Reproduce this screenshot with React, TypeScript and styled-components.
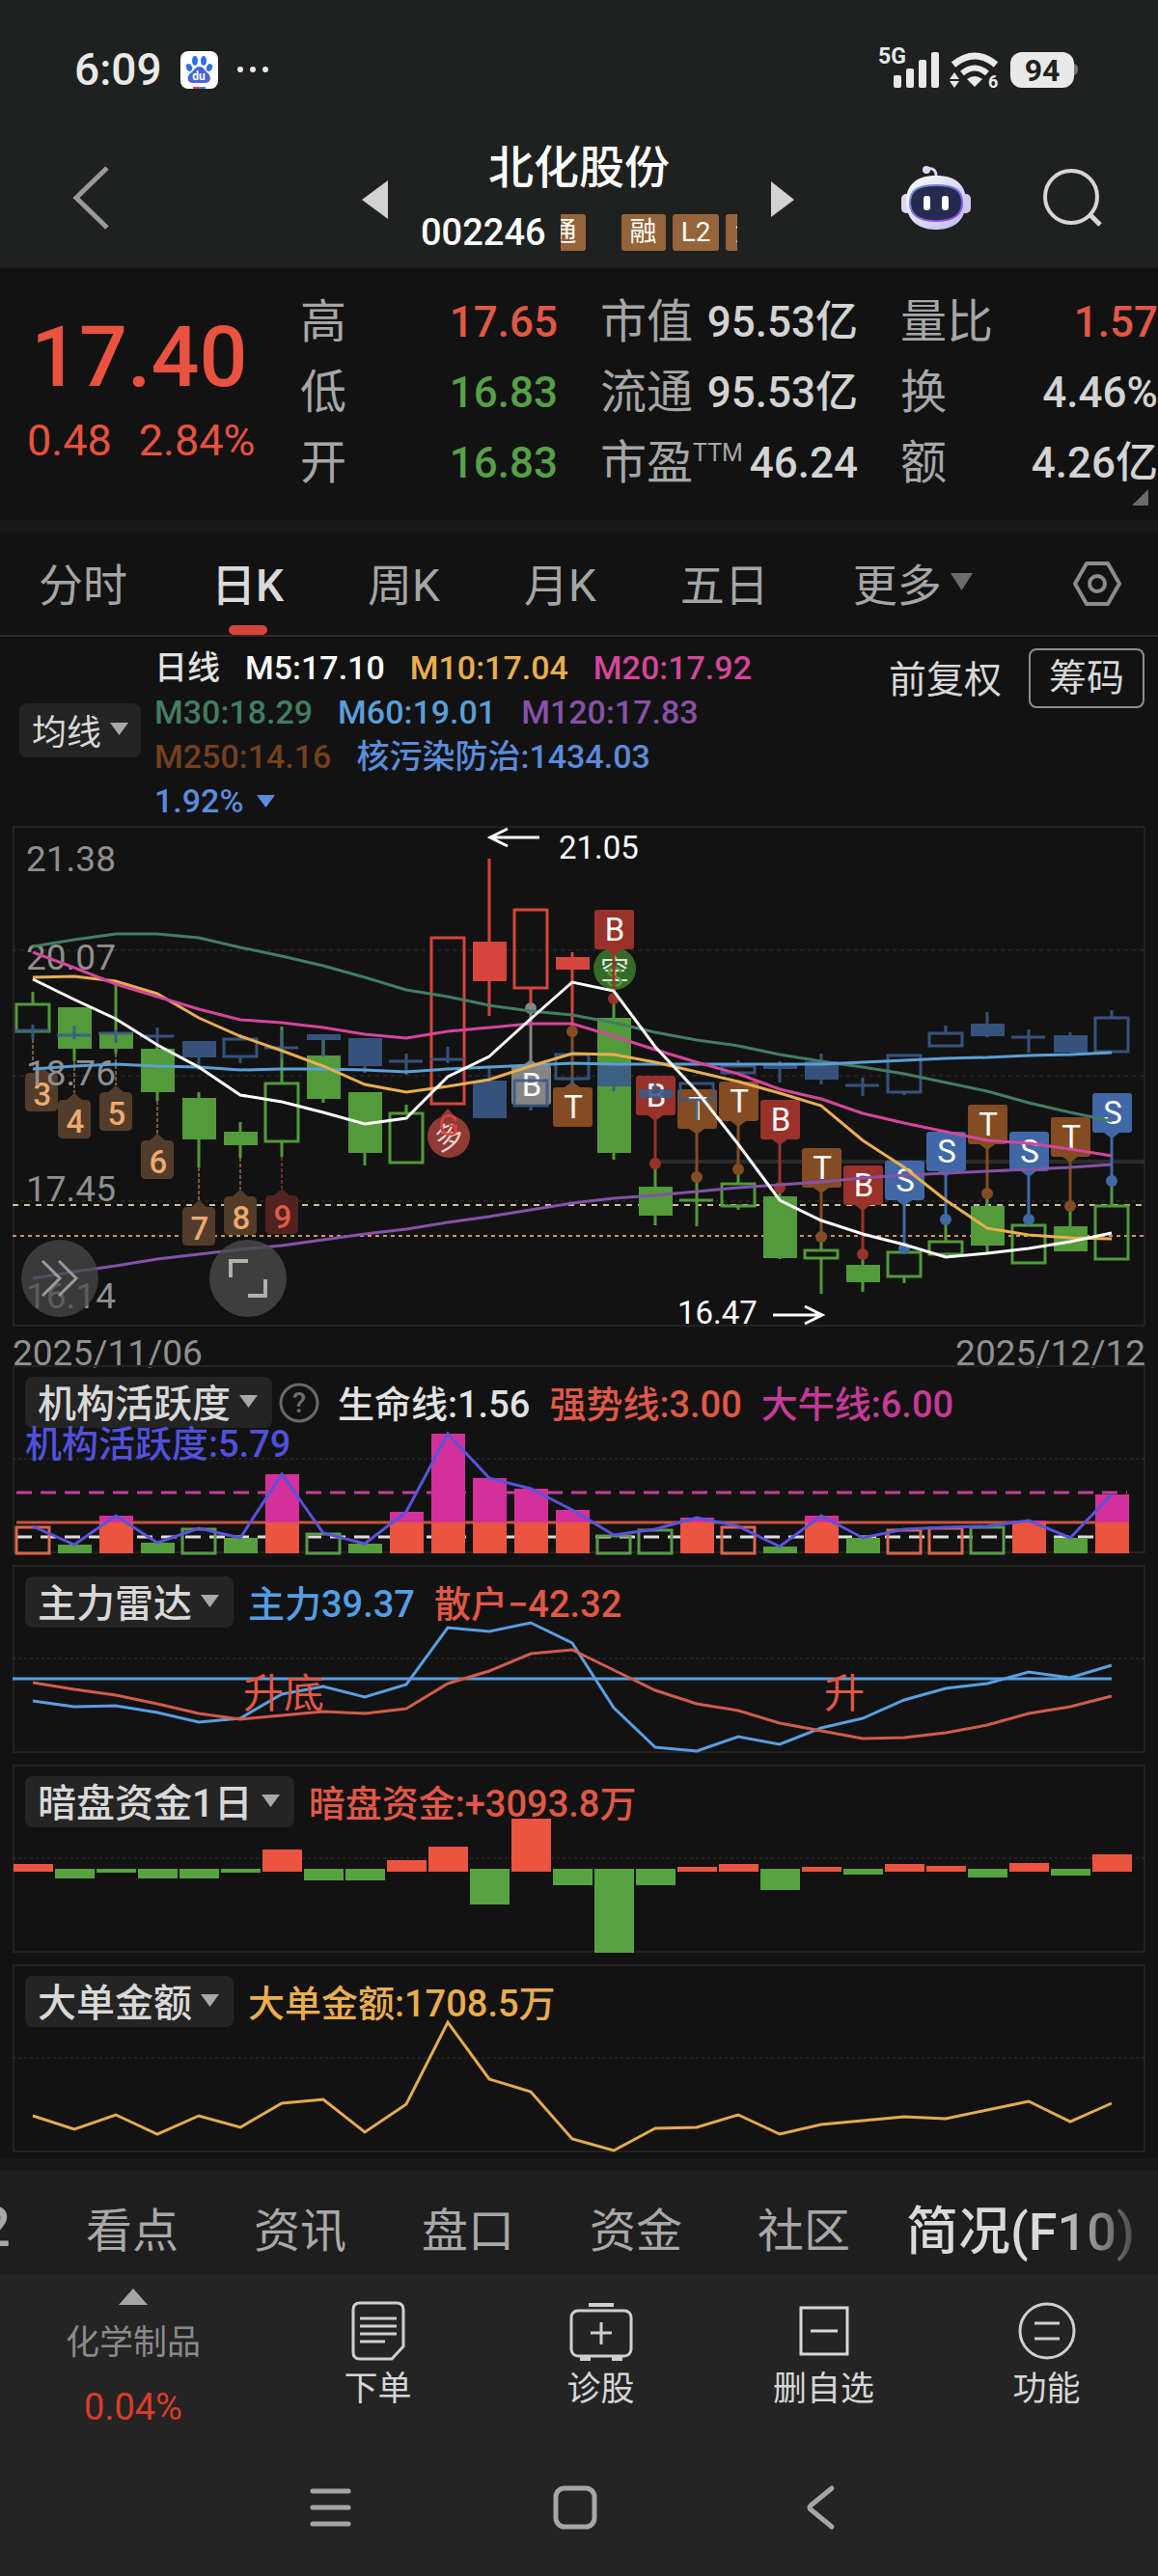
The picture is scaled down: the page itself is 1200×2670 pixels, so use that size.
import React from "react";
import styled, { createGlobalStyle, css } from "styled-components";

const RED = "#e05846";
const GREEN = "#529a3a";
const INDEX_BLUE = "#3a5a88";

const Global = createGlobalStyle`
  *, *::before, *::after { box-sizing: border-box; }
  body { margin: 0; background: #121212; }
  button {
    margin: 0; padding: 0; border: 0; background: none; color: inherit;
    font: inherit; line-height: inherit; cursor: pointer; white-space: nowrap;
  }
  h1, dl, dt, dd, p { margin: 0; font-weight: inherit; }
  svg { display: block; flex: none; }
`;

const Page = styled.div`
  min-height: 100vh;
  display: flex;
  flex-direction: column;
  background: #121212;
  color: #d8d8d8;
  font-family: Roboto, "Noto Sans CJK SC", sans-serif;
  overflow: hidden;
`;

/* ---------- status bar and title ---------- */

const Top = styled.header`
  background: #1f2120;
  padding-bottom: 8px;
`;

const StatusBar = styled.div`
  height: 144px;
  padding: 0 83px 0 77px;
  display: flex;
  align-items: center;
  justify-content: space-between;
  color: #e9e9e9;
`;

const StatusGroup = styled.div<{ $gap: number }>`
  display: flex;
  align-items: center;
  gap: ${(p) => p.$gap}px;
`;

const Clock = styled.span`
  font-size: 46px;
  line-height: 54px;
  font-weight: 500;
`;

const TitleBar = styled.div`
  height: 126px;
  display: grid;
  grid-template-columns: 1fr 450px 1fr;
  align-items: center;
`;

const BackCell = styled.div`
  padding-left: 74px;
`;

const ActionCell = styled.div`
  display: flex;
  justify-content: flex-end;
  align-items: center;
  gap: 73px;
  padding: 0 58px 4px 0;
`;

const StockPicker = styled.div`
  display: flex;
  align-items: center;
  gap: 34px;
`;

const StockTitle = styled.div`
  flex: 1;
  min-width: 0;
  display: flex;
  flex-direction: column;
  align-items: center;
  color: #fff;
`;

const StockName = styled.h1`
  font-size: 47px;
  line-height: 60px;
  padding-bottom: 6px;
  font-weight: 500;
`;

const CodeLine = styled.div`
  width: 100%;
  height: 60px;
  padding-top: 2px;
  display: flex;
  align-items: center;
  gap: 15px;
  font-size: 38px;
  line-height: 44px;
  font-weight: 500;
`;

const Marquee = styled.div`
  flex: 1;
  min-width: 0;
  overflow: hidden;
`;

const MarqueeTrack = styled.div`
  display: flex;
  gap: 7px;
  margin-left: -20px;
`;

const Tag = styled.span<{ $spaced?: boolean }>`
  flex: none;
  padding: 0 9px;
  margin-right: ${(p) => (p.$spaced ? 30 : 0)}px;
  background: #95643a;
  border-radius: 3px;
  font-size: 28px;
  line-height: 38px;
  font-weight: 400;
`;

/* ---------- quote ---------- */

const Quote = styled.section`
  height: 261px;
  padding-top: 19px;
  display: grid;
  grid-template-columns: 267px repeat(3, 1fr);
  column-gap: 44px;
  position: relative;
`;

const PriceBlock = styled.div`
  padding: 29px 0 0 28px;
  color: #e9523f;
  white-space: nowrap;
`;

const Price = styled.div`
  font-size: 88px;
  line-height: 88px;
  padding-left: 4px;
  font-weight: 500;
`;

const Change = styled.div`
  display: flex;
  gap: 28px;
  padding-top: 13px;
  font-size: 45px;
  line-height: 60px;
`;

const Facts = styled.dl`
  display: flex;
  flex-direction: column;
`;

const Fact = styled.div`
  height: 73px;
  display: flex;
  align-items: center;
  justify-content: space-between;
  white-space: nowrap;
`;

const FactName = styled.dt`
  display: flex;
  font-size: 48px;
  line-height: 70px;
  color: #a6a6a6;
`;

const Small = styled.small`
  font-size: 25px;
  line-height: 50px;
`;

const FactValue = styled.dd<{ $color?: string }>`
  font-size: 44px;
  line-height: 64px;
  font-weight: 500;
  color: ${(p) => p.$color ?? "#d3d3d3"};
`;

const Corner = styled.svg`
  position: absolute;
  right: 10px;
  bottom: 15px;
`;

/* ---------- period tabs ---------- */

const Band = styled.div`
  height: 13px;
  background: #181818;
`;

const PeriodTabs = styled.nav`
  height: 108px;
  padding: 0 38px 0 40px;
  display: flex;
  align-items: stretch;
  gap: 87px;
  border-bottom: 2px solid #2c2c2c;
`;

const PeriodTab = styled.button<{ $on?: boolean }>`
  display: flex;
  align-items: center;
  gap: 9px;
  padding-bottom: 5px;
  font-size: 46px;
  color: #a5a5a5;
  ${(p) =>
    p.$on &&
    css`
      color: #dadada;
      font-weight: 500;
      position: relative;
      &::after {
        content: "";
        position: absolute;
        left: calc(50% - 20px);
        bottom: 0;
        width: 40px;
        height: 10px;
        border-radius: 5px;
        background: #d5453d;
      }
    `}
`;

const SettingsButton = styled.button`
  margin-left: auto;
`;

/* ---------- moving averages ---------- */

const Averages = styled.section`
  height: 196px;
  padding: 9px 14px 0 20px;
  display: flex;
  gap: 14px;
`;

const Chip = styled.button<{ $size: "small" | "large" }>`
  flex: none;
  display: flex;
  align-items: center;
  justify-content: center;
  border-radius: 8px;
  background: #242424;
  color: #d8d8d8;
  padding-bottom: 3px;
  ${(p) =>
    p.$size === "small"
      ? css`
          width: 126px;
          height: 56px;
          margin-top: 60px;
          gap: 9px;
          font-size: 36px;
        `
      : css`
          height: 53px;
          padding-left: 13px;
          padding-right: 15px;
          gap: 9px;
          font-size: 40px;
        `}
`;

const AverageLines = styled.div`
  display: flex;
  flex-direction: column;
  font-size: 34px;
  line-height: 46px;
  font-weight: 500;
`;

const AverageRow = styled.div`
  display: flex;
  align-items: center;
  gap: 26px;
  white-space: nowrap;
`;

const Ink = styled.span<{ $color: string }>`
  color: ${(p) => p.$color};
`;

const IndexChange = styled.button`
  display: flex;
  align-items: center;
  gap: 14px;
  color: #5b8cdc;
`;

const AdjustTools = styled.div`
  margin: 3px 0 0 auto;
  height: 66px;
  display: flex;
  align-items: center;
  gap: 28px;
  font-size: 39px;
  line-height: 56px;
  color: #d8d8d8;
`;

const ChipsButton = styled.button`
  width: 120px;
  height: 62px;
  margin-top: -4px;
  border: 2px solid #8f8f8f;
  border-radius: 8px;
`;

/* ---------- charts ---------- */

const Charts = styled.main`
  padding: 0 13px 6px;
  display: flex;
  flex-direction: column;
`;

const Stage = styled.div`
  position: relative;
`;

const Plot = styled.svg`
  width: 100%;
  height: auto;
  overflow: visible;
`;

const RoundButton = styled.button<{ $left: number; $alpha: number }>`
  position: absolute;
  left: ${(p) => p.$left}px;
  bottom: 10px;
  width: 80px;
  height: 80px;
  border-radius: 50%;
  display: grid;
  place-items: center;
  background: rgba(74, 74, 74, ${(p) => p.$alpha});
`;

const Dates = styled.div`
  height: 40px;
  display: flex;
  justify-content: space-between;
  font-size: 37px;
  line-height: 56px;
  color: #909090;
`;

const Panels = styled.div`
  display: flex;
  flex-direction: column;
  gap: 12px;
`;

const PanelBox = styled.section`
  display: grid;
  > * {
    grid-area: 1 / 1;
  }
`;

const PanelHead = styled.div`
  z-index: 1;
  align-self: start;
  padding: 12px 13px 0;
`;

const Legend = styled.div`
  display: flex;
  align-items: center;
  gap: 15px;
  height: 53px;
  font-size: 38px;
  font-weight: 500;
  white-space: nowrap;
`;

const LegendItems = styled.div`
  display: flex;
  gap: 20px;
  padding-bottom: 3px;
`;

const HelpButton = styled.button`
  margin: 0 4px 0 -8px;
`;

const SecondLine = styled.p`
  font-size: 38px;
  line-height: 34px;
  font-weight: 500;
`;

/* ---------- bottom ---------- */

const SectionTabs = styled.nav`
  height: 108px;
  padding-top: 8px;
  display: flex;
  align-items: center;
  gap: 78px;
  background: #1e1e1e;
  overflow: hidden;
`;

const SectionTab = styled.button<{ $kind?: "cut" | "on" }>`
  flex: none;
  font-size: 48px;
  color: #a8a8a8;
  ${(p) =>
    p.$kind === "cut" &&
    css`
      width: 11px;
      font-size: 58px;
      display: flex;
      justify-content: flex-end;
      font-weight: 500;
    `}
  ${(p) =>
    p.$kind === "on" &&
    css`
      margin-left: -20px;
      font-size: 54px;
      font-weight: 500;
      color: transparent;
      background: linear-gradient(90deg, #dadada 64%, #4a4a4a 100%);
      background-clip: text;
    `}
`;

const Footer = styled.footer`
  flex: 1;
  background: #242424;
`;

const Actions = styled.div`
  height: 168px;
  display: grid;
  grid-template-columns: 276fr repeat(4, 231fr);
`;

const Action = styled.button`
  display: flex;
  flex-direction: column;
  align-items: center;
  padding-top: 26px;
  gap: 3px;
  font-size: 35px;
  line-height: 52px;
  color: #d6d6d6;
`;

const Sector = styled(Action)`
  padding-top: 14px;
  gap: 14px;
  color: #8a8a8c;
`;

const SectorChange = styled.span`
  color: #dc3b2a;
  font-size: 38px;
`;

const SystemNav = styled.nav`
  height: 144px;
  padding-top: 48px;
  display: flex;
  justify-content: center;
  align-items: flex-start;
  gap: 206px;
  margin-right: 8px;
`;

/* ---------- shared glyphs ---------- */

const Down = ({ w = 19, h = 13, color = "#a9a9a9" }) => (
  <svg width={w} height={h} viewBox="0 0 20 14" preserveAspectRatio="none" aria-hidden="true">
    <path d="M0 0H20L10 14Z" fill={color} />
  </svg>
);

const SideArrow = ({ flip }: { flip?: boolean }) => (
  <svg width="27" height="40" viewBox="0 0 27 40" aria-hidden="true">
    <path d={flip ? "M1 1V38L25 20Z" : "M27 0V40L0 20Z"} fill="#d2d2d2" />
  </svg>
);

const BaiduIcon = () => (
  <svg width="39" height="39" viewBox="0 0 39 39" aria-hidden="true">
    <rect width="39" height="39" rx="8" fill="#fff" />
    <g fill="#2f6fe6">
      <ellipse cx="15" cy="10" rx="3" ry="5" />
      <ellipse cx="24" cy="10" rx="3" ry="5" />
      <ellipse cx="9" cy="17" rx="3" ry="4" transform="rotate(-20 9 17)" />
      <ellipse cx="30" cy="17" rx="3" ry="4" transform="rotate(20 30 17)" />
      <path d="M19.500 16c5 0 6 5 9 7 4 4 3 10-3 10H13c-6 0-7-6-3-10 4-2 5-7 9.500-7Z" fill="#4a62e0" />
    </g>
    <text x="19" y="30" textAnchor="middle" fontSize="12" fontWeight="700" fill="#fff">du</text>
    <path d="M13 37h6v2h-6Z" fill="#e0453c" />
    <path d="M19 37h7v2h-7Z" fill="#3e7bdc" />
  </svg>
);

const Radio = () => (
  <svg width="209" height="48" viewBox="908 48 209 48" fill="#e9e9e9" aria-hidden="true">
    <text x="910" y="66" fontSize="23" fontWeight="700">5G</text>
    <rect x="926" y="78" width="8" height="13" rx="2" />
    <rect x="939" y="71" width="8" height="20" rx="2" />
    <rect x="952" y="62" width="8" height="29" rx="2" />
    <rect x="965" y="54" width="8" height="37" rx="2" />
    <g fill="none" stroke="#e9e9e9" strokeWidth="7">
      <path d="M988 67Q1010 49 1032 67" />
      <path d="M997 76Q1010 65 1023 76" strokeWidth="6" />
    </g>
    <path d="M1002 82Q1010 76 1018 82L1010 90Z" />
    <path d="M984 82L989 75L994 82ZM984 84H994L989 91Z" />
    <text x="1024" y="91" fontSize="18" fontWeight="700">6</text>
    <rect x="1047" y="54" width="66" height="37" rx="12" />
    <path d="M1113 66q4 1 4 6t-4 6Z" fill="#777" />
    <text x="1080" y="84" textAnchor="middle" fontSize="32" fontWeight="700" fill="#1f2120">94</text>
  </svg>
);

const Robot = () => (
  <svg width="74" height="68" viewBox="0 0 74 68" aria-hidden="true">
    <defs>
      <linearGradient id="shell" x1="0" y1="0" x2="1" y2="1">
        <stop offset="0" stopColor="#fff" />
        <stop offset="1" stopColor="#bdb6ee" />
      </linearGradient>
      <linearGradient id="visorEdge" x1="0" y1="0" x2="1" y2="1">
        <stop offset="0" stopColor="#6a9ae6" />
        <stop offset="1" stopColor="#8f3fe0" />
      </linearGradient>
    </defs>
    <path d="M28 4q10-2 9 10" fill="none" stroke="#dcd8f2" strokeWidth="3" />
    <circle cx="27" cy="5" r="4" fill="#ddd9f5" />
    <rect x="1" y="30" width="12" height="20" rx="5" fill="#d9d6ef" />
    <rect x="61" y="30" width="12" height="20" rx="5" fill="#d0cbea" />
    <path d="M37 11c21 0 31 10 31 27S58 67 37 67 6 55 6 38s10-27 31-27Z" fill="url(#shell)" />
    <path
      d="M37 21c19 0 27 5 27 18s-9 19-27 19-27-6-27-19 8-18 27-18Z"
      fill="#262a4e"
      stroke="url(#visorEdge)"
      strokeWidth="2"
    />
    <rect x="24" y="32" width="7" height="15" rx="3" fill="#fff" />
    <rect x="43" y="32" width="7" height="15" rx="3" fill="#fff" />
  </svg>
);

/* ---------- price chart ---------- */

const xAt = (i: number) => 34 + 43 * i;

/* shape, body top, body bottom, high, low */
type Candle = ["hollow" | "solid" | "line", number, number, number, number];

const candles: Candle[] = [
  ["hollow", 1042, 1070, 1029, 1072],
  ["solid", 1045, 1088, 1045, 1101],
  ["solid", 1071, 1088, 1022, 1093],
  ["solid", 1088, 1133, 1085, 1142],
  ["solid", 1139, 1182, 1133, 1211],
  ["solid", 1174, 1188, 1164, 1201],
  ["hollow", 1124, 1184, 1065, 1200],
  ["solid", 1095, 1140, 1079, 1144],
  ["solid", 1133, 1196, 1133, 1209],
  ["hollow", 1155, 1206, 1146, 1207],
  ["hollow", 973, 1145, 973, 1146],
  ["solid", 977, 1018, 891, 1054],
  ["hollow", 944, 1025, 944, 1046],
  ["solid", 993, 1006, 988, 1068],
  ["solid", 1056, 1196, 1036, 1203],
  ["solid", 1231, 1261, 1208, 1271],
  ["line", 1245, 1245, 1222, 1272],
  ["hollow", 1228, 1251, 1214, 1255],
  ["solid", 1241, 1305, 1233, 1306],
  ["hollow", 1297, 1305, 1284, 1342],
  ["solid", 1312, 1330, 1303, 1340],
  ["hollow", 1299, 1324, 1297, 1331],
  ["hollow", 1288, 1301, 1266, 1301],
  ["solid", 1251, 1292, 1240, 1299],
  ["hollow", 1271, 1310, 1268, 1310],
  ["solid", 1272, 1298, 1252, 1298],
  ["hollow", 1251, 1306, 1227, 1306],
];

const indexCandles: Candle[] = [
  ["line", 1069, 1069, 1063, 1078],
  ["line", 1074, 1074, 1064, 1078],
  ["line", 1072, 1072, 1068, 1082],
  ["line", 1075, 1075, 1066, 1085],
  ["solid", 1080, 1097, 1080, 1110],
  ["hollow", 1078, 1096, 1073, 1103],
  ["line", 1087, 1087, 1069, 1099],
  ["solid", 1073, 1079, 1073, 1096],
  ["solid", 1077, 1106, 1077, 1113],
  ["line", 1101, 1101, 1093, 1115],
  ["line", 1099, 1099, 1086, 1103],
  ["solid", 1121, 1160, 1108, 1160],
  ["hollow", 1121, 1147, 1121, 1152],
  ["hollow", 1094, 1119, 1089, 1127],
  ["solid", 1104, 1127, 1104, 1132],
  ["solid", 1130, 1139, 1124, 1142],
  ["hollow", 1124, 1141, 1124, 1162],
  ["hollow", 1106, 1113, 1100, 1113],
  ["solid", 1103, 1109, 1101, 1123],
  ["solid", 1101, 1120, 1093, 1125],
  ["line", 1126, 1126, 1118, 1137],
  ["hollow", 1095, 1133, 1095, 1136],
  ["hollow", 1072, 1085, 1064, 1086],
  ["solid", 1062, 1075, 1050, 1076],
  ["line", 1076, 1076, 1068, 1092],
  ["solid", 1074, 1092, 1071, 1092],
  ["hollow", 1056, 1091, 1048, 1091],
];

const averages: [string, number[]][] = [
  ["#437d62", [982, 975, 969, 969, 973, 983, 992, 1002, 1014, 1027, 1034, 1043, 1049, 1053, 1061, 1071, 1079, 1085, 1094, 1101, 1107, 1114, 1123, 1132, 1144, 1154, 1163]],
  ["#8552a8", [1326, 1319, 1313, 1306, 1301, 1296, 1292, 1286, 1280, 1275, 1268, 1262, 1255, 1248, 1243, 1240, 1236, 1232, 1229, 1226, 1222, 1219, 1217, 1215, 1213, 1211, 1208]],
  ["#5a9fd6", [1109, 1106, 1104, 1106, 1107, 1110, 1109, 1109, 1110, 1112, 1109, 1107, 1105, 1103, 1104, 1104, 1104, 1104, 1104, 1104, 1102, 1100, 1098, 1097, 1095, 1094, 1092]],
  ["#e9ae4e", [1014, 1013, 1018, 1031, 1056, 1075, 1090, 1106, 1125, 1133, 1127, 1120, 1106, 1093, 1094, 1102, 1112, 1122, 1134, 1147, 1183, 1211, 1245, 1274, 1281, 1284, 1285]],
  ["#d4469c", [988, 1004, 1021, 1034, 1047, 1058, 1061, 1066, 1073, 1077, 1070, 1066, 1062, 1062, 1075, 1089, 1102, 1114, 1130, 1140, 1155, 1165, 1174, 1183, 1186, 1192, 1199]],
  ["#ffffff", [1016, 1037, 1057, 1084, 1107, 1136, 1143, 1154, 1166, 1160, 1117, 1096, 1057, 1019, 1028, 1086, 1132, 1187, 1245, 1266, 1280, 1291, 1304, 1300, 1295, 1288, 1279]],
];

/* count, centre x, stem start, label tip */
const counts: [number, number, number, number][] = [
  [3, 43, 1078, 1106],
  [4, 77, 1101, 1134],
  [5, 120, 1093, 1126],
  [6, 163, 1142, 1176],
  [7, 206, 1211, 1245],
  [8, 249, 1201, 1234],
  [9, 292, 1200, 1233],
];

/* letter, column, top of the label, dot */
const signals: [string, number, number, number][] = [
  ["N", 12, 1105, 1046],
  ["T", 13, 1128, 1070],
  ["B", 14, 944, 1036],
  ["B", 15, 1116, 1207],
  ["T", 16, 1130, 1221],
  ["T", 17, 1122, 1213],
  ["B", 18, 1141, 1232],
  ["T", 19, 1191, 1283],
  ["B", 20, 1209, 1301],
  ["S", 21, 1204, 1295],
  ["S", 22, 1174, 1265],
  ["T", 23, 1146, 1238],
  ["S", 24, 1174, 1265],
  ["T", 25, 1159, 1251],
  ["S", 26, 1134, 1225],
];

const signalStyle: Record<string, [string, string]> = {
  N: ["B", "#858585"],
  B: ["B", "#98322b"],
  T: ["T", "#834c22"],
  S: ["S", "#4068a6"],
};

const points = (ys: number[]) => ys.map((y, i) => `${xAt(i)},${y}`).join(" ");

const CandleMark = ({ c, i, color }: { c: Candle; i: number; color: string }) => {
  const [kind, top, bottom, high, low] = c;
  const x = xAt(i);
  return (
    <g stroke={color} strokeWidth="3" fill="none">
      {kind === "line" ? (
        <path d={`M${x - 18} ${top}H${x + 17}M${x} ${high}V${low}`} />
      ) : (
        <>
          <path d={`M${x} ${high}V${top}M${x} ${bottom}V${low}`} />
          {kind === "solid" ? (
            <rect x={x - 17} y={top} width="35" height={bottom - top} fill={color} stroke="none" />
          ) : (
            <rect x={x - 17} y={top} width="34" height={bottom - top} />
          )}
        </>
      )}
    </g>
  );
};

const PriceChart = () => (
  <Plot viewBox="13 857 1174 519" role="img" aria-label="日K 2025/11/06 - 2025/12/12">
    <rect x="14" y="858" width="1172" height="517" fill="none" stroke="#222" strokeWidth="2" />
    <g stroke="#333" strokeDasharray="4 4">
      <path d="M13 986H1186M13 1116H1186M13 1246H1186" />
    </g>
    <path d="M685 1205H1186" stroke="#2b2b2b" strokeWidth="4" />
    <path d="M13 1250H1186" stroke="#d3bd8c" strokeWidth="2" strokeDasharray="6 6" />
    <path d="M13 1282H1186" stroke="#d9905c" strokeWidth="2" strokeDasharray="4 4" />

    {candles.map((c, i) => (
      <CandleMark key={i} c={c} i={i} color={i >= 10 && i <= 13 ? "#d5453c" : GREEN} />
    ))}

    {counts.map(([n, x, from, tip]) => (
      <g key={n}>
        <path d={`M${n === 3 ? 34 : x} ${from}V${tip}`} stroke={n === 9 ? "#d04c3e" : "#d9a272"} strokeDasharray="4 2" />
        <path
          d={`M${x} ${tip}l8 7h4q5 0 5 5v30q0 5-5 5h-24q-5 0-5-5v-30q0-5 5-5h4Z`}
          fill={n === 9 ? "#50231f" : "#543c2a"}
        />
        <text x={x + 1} y={tip + 41} fontSize="33" fontWeight="500" textAnchor="middle" fill={n === 9 ? "#e05a48" : "#edaa70"}>
          {n}
        </text>
      </g>
    ))}

    <g>
      <circle cx="637" cy="1005" r="22" fill="#356b27" />
      <text x="637" y="1016" fontSize="30" textAnchor="middle" fill="#dfe6dc">空</text>
      <text x="637" y="1024" fontSize="30" textAnchor="middle" fill={GREEN}>S</text>
      <path d="M464 1150l7 8h-14Z" fill="#8f3a35" />
      <circle cx="465" cy="1179" r="22" fill="#8f3a35" />
      <text x="465" y="1190" fontSize="30" textAnchor="middle" fill="#e6d6d4" transform="rotate(-20 465 1179)">多</text>
      <text x="465" y="1178" fontSize="32" textAnchor="middle" fill="#d5453c">G</text>
    </g>

    {signals.map(([key, i, top, dot]) => {
      const [letter, color] = signalStyle[key];
      const x = xAt(i);
      const below = dot < top && top > 1000;
      return (
        <g key={i} fill={color}>
          <circle cx={x} cy={dot} r="6" />
          <path d={below ? `M${x} ${dot}V${top}` : `M${x} ${top + 41}V${dot}`} stroke={color} strokeWidth="3" />
          <rect x={x - 20} y={top} width="41" height="41" rx="3" />
          <path d={below ? `M${x - 8} ${top}h16l-8-6Z` : `M${x - 8} ${top + 41}h16l-8 6Z`} />
          <text x={x + 1} y={top + 32} fontSize="33" textAnchor="middle" fill="#fff">{letter}</text>
        </g>
      );
    })}

    <g fill="#8f8f8f" fontSize="37">
      <text x="27" y="904">21.38</text>
      <text x="27" y="1006">20.07</text>
      <text x="27" y="1126">18.76</text>
      <text x="27" y="1246">17.45</text>
      <text x="27" y="1357">16.14</text>
    </g>

    <g opacity="0.9">
      {indexCandles.map((c, i) => (
        <CandleMark key={i} c={c} i={i} color={INDEX_BLUE} />
      ))}
    </g>

    {averages.map(([color, ys]) => (
      <polyline key={color} points={points(ys)} fill="none" stroke={color} strokeWidth="3" />
    ))}

    <g fill="none" stroke="#fff" strokeWidth="3">
      <path d="M559 869H508M526 860L508 869L526 878" />
      <path d="M801 1364H852M834 1355L852 1364L834 1373" />
    </g>
    <g fill="#fff" fontSize="33">
      <text x="579" y="891">21.05</text>
      <text x="702" y="1373">16.47</text>
    </g>
  </Plot>
);

/* ---------- indicator panels ---------- */

/* upper case is a filled bar, lower case an outline */
const activity: [("r" | "g" | "R" | "G"), number][] = [
  ["r", 1582], ["G", 1601], ["R", 1571], ["G", 1599], ["g", 1584], ["G", 1594], ["R", 1528],
  ["g", 1589], ["G", 1600], ["R", 1567], ["R", 1486], ["R", 1532], ["R", 1543], ["R", 1565],
  ["g", 1591], ["g", 1585], ["R", 1573], ["r", 1582], ["G", 1603], ["R", 1571], ["G", 1594],
  ["r", 1585], ["r", 1583], ["g", 1582], ["R", 1576], ["G", 1594], ["R", 1549],
];

const mainForce = [1763, 1769, 1768, 1775, 1785, 1781, 1756, 1748, 1759, 1746, 1687, 1691, 1682, 1703, 1770, 1811, 1815, 1800, 1808, 1791, 1781, 1762, 1750, 1745, 1733, 1739, 1726];
const retail = [1744, 1751, 1757, 1766, 1776, 1782, 1778, 1774, 1776, 1771, 1745, 1732, 1714, 1710, 1731, 1752, 1766, 1773, 1786, 1794, 1802, 1801, 1796, 1788, 1776, 1769, 1758];
const darkFlow = [8, -9, -3, -9, -9, -3, 23, -11, -11, 12, 26, -36, 55, -16, -86, -16, 5, 8, -21, 5, -5, 8, 6, -8, 9, -6, 18];
const bigOrders = [2193, 2207, 2192, 2212, 2193, 2205, 2180, 2176, 2210, 2181, 2096, 2155, 2168, 2217, 2229, 2206, 2205, 2192, 2212, 2202, 2198, 2194, 2196, 2187, 2178, 2199, 2180];

const Frame = ({ top, children, label }: { top: number; label: string; children: React.ReactNode }) => (
  <Plot viewBox={`13 ${top - 1} 1174 195`} role="img" aria-label={label}>
    <rect x="14" y={top} width="1172" height="193" fill="none" stroke="#222" strokeWidth="2" />
    <path d={`M13 ${top + 96}H1186`} stroke="#333" strokeDasharray="3 3" />
    {children}
  </Plot>
);

const ActivityChart = () => (
  <Frame top={1416} label="机构活跃度">
    <path d="M17 1547H1168" stroke="#c2409a" strokeWidth="3" strokeDasharray="16 9" />
    <path d="M17 1593H1168" stroke="#ddd" strokeWidth="3" strokeDasharray="16 9" />
    <path d="M17 1578H1168" stroke="#c8553f" strokeWidth="3" />
    {activity.map(([kind, y], i) => {
      const x = xAt(i) - 17;
      if (kind === "r" || kind === "g")
        return (
          <rect key={i} x={x} y={y + 1} width="34" height={1609 - y} fill="none" stroke={kind === "r" ? "#dc6650" : "#5a9a48"} strokeWidth="3" />
        );
      if (kind === "G") return <rect key={i} x={x} y={y} width="35" height={1610 - y} fill="#559f3c" />;
      return (
        <g key={i}>
          <rect x={x} y={y} width="35" height={1578 - y} fill="#d4309c" />
          <rect x={x} y="1578" width="35" height="32" fill="#ea5440" />
        </g>
      );
    })}
    <polyline points={points(activity.map((a) => a[1]))} fill="none" stroke="#5854dc" strokeWidth="3" />
  </Frame>
);

const RadarChart = () => (
  <Frame top={1623} label="主力雷达">
    <path d="M13 1740H1152" stroke="#5a9fe0" strokeWidth="3" />
    <polyline points={points(mainForce)} fill="none" stroke="#5a9fe0" strokeWidth="3" />
    <g fill={RED} fontSize="42">
      <text x="252" y="1770">升底</text>
      <text x="854" y="1770">升</text>
    </g>
    <polyline points={points(retail)} fill="none" stroke="#d05c4c" strokeWidth="3" />
  </Frame>
);

const DarkFlowChart = () => (
  <Frame top={1830} label="暗盘资金">
    {darkFlow.map((v, i) => (
      <rect
        key={i}
        x={xAt(i) - 20}
        y={v > 0 ? 1940 - v : 1937}
        width="41"
        height={v > 0 ? v : 1 - v}
        fill={v > 0 ? "#ea5440" : "#57a342"}
      />
    ))}
  </Frame>
);

const BigOrderChart = () => (
  <Frame top={2037} label="大单金额">
    <polyline points={points(bigOrders)} fill="none" stroke="#e5ab50" strokeWidth="3" />
  </Frame>
);

const PanelTitle = ({ name, help, children }: { name: string; help?: boolean; children: React.ReactNode }) => (
  <Legend>
    <Chip $size="large">{name}<Down /></Chip>
    {help && (
      <HelpButton aria-label="说明">
        <svg width="42" height="42" viewBox="0 0 42 42" aria-hidden="true">
          <circle cx="21" cy="21" r="19" fill="none" stroke="#6a6a6a" strokeWidth="3" />
          <text x="21" y="31" fontSize="29" textAnchor="middle" fill="#6f6f6f">?</text>
        </svg>
      </HelpButton>
    )}
    <LegendItems>{children}</LegendItems>
  </Legend>
);

/* ---------- page ---------- */

export default function App() {
  return (
    <Page>
      <Global />
      <Top>
        <StatusBar>
          <StatusGroup $gap={19}>
            <Clock>6:09</Clock>
            <BaiduIcon />
            <svg width="34" height="8" viewBox="0 0 34 8" fill="#e9e9e9" aria-hidden="true">
              <circle cx="4" cy="4" r="3" /><circle cx="17" cy="4" r="3" /><circle cx="30" cy="4" r="3" />
            </svg>
          </StatusGroup>
          <Radio />
        </StatusBar>
        <TitleBar>
          <BackCell>
            <button aria-label="返回">
              <svg width="42" height="66" viewBox="0 0 42 66" aria-hidden="true">
                <path d="M37 2L5 33L37 64" fill="none" stroke="#999" strokeWidth="5" />
              </svg>
            </button>
          </BackCell>
          <StockPicker>
            <button aria-label="上一只"><SideArrow /></button>
            <StockTitle>
              <StockName>北化股份</StockName>
              <CodeLine>
                002246
                <Marquee>
                  <MarqueeTrack>
                    <Tag $spaced>通</Tag>
                    <Tag>融</Tag>
                    <Tag>L2</Tag>
                    <Tag>深</Tag>
                  </MarqueeTrack>
                </Marquee>
              </CodeLine>
            </StockTitle>
            <button aria-label="下一只"><SideArrow flip /></button>
          </StockPicker>
          <ActionCell>
            <button aria-label="智能助手"><Robot /></button>
            <button aria-label="搜索">
              <svg width="62" height="62" viewBox="0 0 62 62" fill="none" stroke="#d6d6d6" strokeWidth="4" aria-hidden="true">
                <circle cx="30" cy="30" r="27" />
                <path d="M49 48L60 59" strokeWidth="5" />
              </svg>
            </button>
          </ActionCell>
        </TitleBar>
      </Top>

      <Quote>
        <PriceBlock>
          <Price>17.40</Price>
          <Change><span>0.48</span><span>2.84%</span></Change>
        </PriceBlock>
        <Facts>
          <Fact><FactName>高</FactName><FactValue $color={RED}>17.65</FactValue></Fact>
          <Fact><FactName>低</FactName><FactValue $color="#57a046">16.83</FactValue></Fact>
          <Fact><FactName>开</FactName><FactValue $color="#57a046">16.83</FactValue></Fact>
        </Facts>
        <Facts>
          <Fact><FactName>市值</FactName><FactValue>95.53亿</FactValue></Fact>
          <Fact><FactName>流通</FactName><FactValue>95.53亿</FactValue></Fact>
          <Fact><FactName>市盈<Small>TTM</Small></FactName><FactValue>46.24</FactValue></Fact>
        </Facts>
        <Facts>
          <Fact><FactName>量比</FactName><FactValue $color={RED}>1.57</FactValue></Fact>
          <Fact><FactName>换</FactName><FactValue>4.46%</FactValue></Fact>
          <Fact><FactName>额</FactName><FactValue>4.26亿</FactValue></Fact>
        </Facts>
        <Corner width="17" height="17" viewBox="0 0 17 17" aria-hidden="true">
          <path d="M17 0V17H0Z" fill="#6b6b6b" />
        </Corner>
      </Quote>

      <Band />

      <PeriodTabs>
        <PeriodTab>分时</PeriodTab>
        <PeriodTab $on>日K</PeriodTab>
        <PeriodTab>周K</PeriodTab>
        <PeriodTab>月K</PeriodTab>
        <PeriodTab>五日</PeriodTab>
        <PeriodTab>更多<Down w={23} h={18} color="#6b6b6b" /></PeriodTab>
        <SettingsButton aria-label="设置">
          <svg width="50" height="46" viewBox="0 0 50 46" fill="none" stroke="#8c8c8c" strokeWidth="4" strokeLinejoin="round" aria-hidden="true">
            <path d="M14 2H36L48 23L36 44H14L2 23Z" />
            <circle cx="25" cy="23" r="8" />
          </svg>
        </SettingsButton>
      </PeriodTabs>

      <Averages>
        <Chip $size="small">均线<Down /></Chip>
        <AverageLines>
          <AverageRow>
            <Ink $color="#e2e2e2">日线</Ink>
            <Ink $color="#ffffff">M5:17.10</Ink>
            <Ink $color="#e9ae4e">M10:17.04</Ink>
            <Ink $color="#d4469c">M20:17.92</Ink>
          </AverageRow>
          <AverageRow>
            <Ink $color="#437d62">M30:18.29</Ink>
            <Ink $color="#5a9fd6">M60:19.01</Ink>
            <Ink $color="#8552a8">M120:17.83</Ink>
          </AverageRow>
          <AverageRow>
            <Ink $color="#75401f">M250:14.16</Ink>
            <Ink $color="#5b8cdc">核污染防治:1434.03</Ink>
          </AverageRow>
          <AverageRow>
            <IndexChange>1.92%<Down color="#5b8cdc" /></IndexChange>
          </AverageRow>
        </AverageLines>
        <AdjustTools>
          <button>前复权</button>
          <ChipsButton>筹码</ChipsButton>
        </AdjustTools>
      </Averages>

      <Charts>
        <Stage>
          <PriceChart />
          <RoundButton $left={9} $alpha={0.72} aria-label="展开">
            <svg width="40" height="40" viewBox="0 0 40 40" fill="none" stroke="#9a9a9a" strokeWidth="3" aria-hidden="true">
              <path d="M2 2L20 20L2 38M19 2L37 20L19 38" />
            </svg>
          </RoundButton>
          <RoundButton $left={204} $alpha={0.8} aria-label="全屏">
            <svg width="42" height="42" viewBox="0 0 42 42" fill="none" stroke="#b0b0b0" strokeWidth="4" aria-hidden="true">
              <path d="M21 3H3V20M21 39H39V22" />
            </svg>
          </RoundButton>
        </Stage>
        <Dates><span>2025/11/06</span><span>2025/12/12</span></Dates>

        <Panels>
          <PanelBox>
            <ActivityChart />
            <PanelHead>
              <PanelTitle name="机构活跃度" help>
                <Ink $color="#e2e2e2">生命线:1.56</Ink>
                <Ink $color={RED}>强势线:3.00</Ink>
                <Ink $color="#c63a98">大牛线:6.00</Ink>
              </PanelTitle>
              <SecondLine><Ink $color="#5151dc">机构活跃度:5.79</Ink></SecondLine>
            </PanelHead>
          </PanelBox>
          <PanelBox>
            <RadarChart />
            <PanelHead>
              <PanelTitle name="主力雷达">
                <Ink $color="#539fe6">主力39.37</Ink>
                <Ink $color={RED}>散户−42.32</Ink>
              </PanelTitle>
            </PanelHead>
          </PanelBox>
          <PanelBox>
            <DarkFlowChart />
            <PanelHead>
              <PanelTitle name="暗盘资金1日">
                <Ink $color={RED}>暗盘资金:+3093.8万</Ink>
              </PanelTitle>
            </PanelHead>
          </PanelBox>
          <PanelBox>
            <BigOrderChart />
            <PanelHead>
              <PanelTitle name="大单金额">
                <Ink $color="#e9ae4e">大单金额:1708.5万</Ink>
              </PanelTitle>
            </PanelHead>
          </PanelBox>
        </Panels>
      </Charts>

      <Band />

      <SectionTabs>
        <SectionTab $kind="cut">2</SectionTab>
        <SectionTab>看点</SectionTab>
        <SectionTab>资讯</SectionTab>
        <SectionTab>盘口</SectionTab>
        <SectionTab>资金</SectionTab>
        <SectionTab>社区</SectionTab>
        <SectionTab $kind="on">简况(F10)</SectionTab>
      </SectionTabs>

      <Footer>
        <Actions>
          <Sector>
            <svg width="30" height="17" viewBox="0 0 30 17" aria-hidden="true"><path d="M15 0L30 17H0Z" fill="#a6a6a6" /></svg>
            <span>化学制品</span>
            <SectorChange>0.04%</SectorChange>
          </Sector>
          <Action>
            <svg width="58" height="64" viewBox="0 0 58 64" fill="none" stroke="#cfcfcf" strokeWidth="3" aria-hidden="true">
              <path d="M10 3H48Q55 3 55 10V48L43 61H10Q3 61 3 54V10Q3 3 10 3Z" />
              <path d="M10 19H48M10 27H48M10 35H48M10 43H36" />
            </svg>
            下单
          </Action>
          <Action>
            <svg width="66" height="64" viewBox="0 0 66 64" fill="none" stroke="#cfcfcf" strokeWidth="3" aria-hidden="true">
              <path d="M20 5H46" strokeWidth="4" />
              <rect x="2" y="11" width="62" height="47" rx="7" />
              <path d="M33 23V46M22 34H44" />
              <path d="M11 61H22M44 61H55" strokeWidth="4" />
            </svg>
            诊股
          </Action>
          <Action>
            <svg width="52" height="64" viewBox="0 0 52 64" fill="none" stroke="#d8d8d8" strokeWidth="3" aria-hidden="true">
              <rect x="2" y="8" width="48" height="48" />
              <path d="M12 32H40" />
            </svg>
            删自选
          </Action>
          <Action>
            <svg width="60" height="64" viewBox="0 0 60 64" fill="none" stroke="#cfcfcf" strokeWidth="3" aria-hidden="true">
              <circle cx="30" cy="32" r="28" />
              <path d="M17 24H43M17 40H43" />
            </svg>
            功能
          </Action>
        </Actions>
        <SystemNav>
          <button aria-label="任务">
            <svg width="44" height="50" viewBox="0 0 44 50" stroke="#a6a6a6" strokeWidth="5" strokeLinecap="round" aria-hidden="true">
              <path d="M3 8H40M3 25H40M3 42H40" />
            </svg>
          </button>
          <button aria-label="主页">
            <svg width="50" height="50" viewBox="0 0 50 50" fill="none" stroke="#a6a6a6" strokeWidth="5" aria-hidden="true">
              <rect x="5" y="5" width="40" height="40" rx="9" />
            </svg>
          </button>
          <button aria-label="后退">
            <svg width="44" height="50" viewBox="0 0 44 50" fill="none" stroke="#a6a6a6" strokeWidth="5" strokeLinecap="round" strokeLinejoin="round" aria-hidden="true">
              <path d="M35 5L13 23Q11 25 13 27L35 45" />
            </svg>
          </button>
        </SystemNav>
      </Footer>
    </Page>
  );
}
